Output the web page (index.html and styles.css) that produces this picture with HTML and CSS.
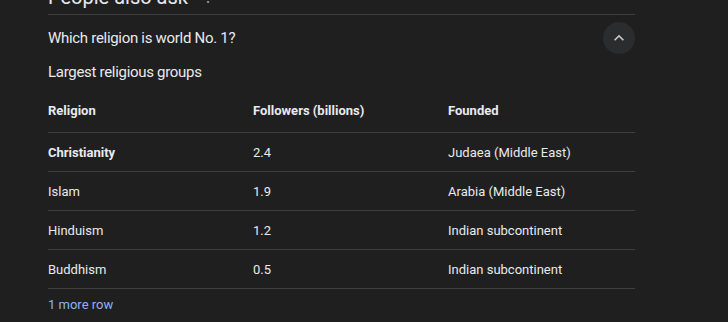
FILE: index.html
```html
<!DOCTYPE html>
<html>
<head>
<meta charset="utf-8">
<link rel="stylesheet" href="styles.css">
</head>
<body>
<div class="wrap">
  <div class="heading"><span class="title">People also ask</span><span class="dots">⋮</span></div>
  <div class="question">
    <span class="qtext">Which religion is world No. 1?</span>
    <span class="toggle"><svg width="20" height="20" viewBox="0 0 24 24"><path d="M7.41 15.41 12 10.83l4.59 4.58L18 14l-6-6-6 6z" fill="#c4c7cc"/></svg></span>
  </div>
  <div class="caption">Largest religious groups</div>
  <table class="tbl">
    <thead>
      <tr><th class="c1">Religion</th><th class="c2">Followers (billions)</th><th>Founded</th></tr>
    </thead>
    <tbody>
      <tr><td class="b">Christianity</td><td>2.4</td><td>Judaea (Middle East)</td></tr>
      <tr><td>Islam</td><td>1.9</td><td>Arabia (Middle East)</td></tr>
      <tr><td>Hinduism</td><td>1.2</td><td>Indian subcontinent</td></tr>
      <tr><td>Buddhism</td><td>0.5</td><td>Indian subcontinent</td></tr>
    </tbody>
  </table>
  <div class="more">1 more row</div>
</div>
</body>
</html>
```
FILE: styles.css
```css
html, body { margin: 0; padding: 0; background: #1f1f1f; }
body { font-family: Roboto, "Open Sans", sans-serif; color: #e8eaed; overflow: hidden; height: 322px; }
.wrap { margin-left: 48px; width: 587px; }
.heading { height: 14px; border-bottom: 1px solid #3c4043; position: relative; overflow: hidden; }
.title { position: absolute; left: 0; top: -15px; font-size: 20px; line-height: 24px; color: #e8eaed; }
.dots { position: absolute; left: 152px; top: -13px; font-size: 16px; line-height: 20px; color: #9aa0a6; }
.question { display: flex; align-items: center; justify-content: space-between; height: 32px; margin-top: 7px; }
.qtext { font-size: 15px; letter-spacing: -0.3px; }
.toggle { width: 32px; height: 32px; border-radius: 50%; background: #2b2c2e; display: flex; align-items: center; justify-content: center; }
.caption { font-size: 15px; letter-spacing: -0.3px; margin-top: 8px; line-height: 20px; }
.tbl { width: 100%; border-collapse: collapse; margin-top: 17px; font-size: 13px; }
.tbl th { text-align: left; font-weight: 700; height: 23px; padding: 0 0 10px 0; vertical-align: middle; }
.tbl th.c1 { width: 205px; }
.tbl th.c2 { width: 195px; }
.tbl td { height: 38px; padding: 0; border-top: 1px solid #3c4043; vertical-align: middle; }
.tbl tbody tr:last-child td { border-bottom: 1px solid #3c4043; }
.tbl td.b { font-weight: 700; }
.more { color: #8ab4f8; font-size: 13px; margin-top: 8px; }
```
